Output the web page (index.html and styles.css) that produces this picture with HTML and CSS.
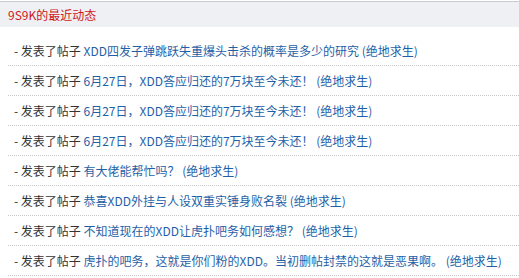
FILE: index.html
```html
<!DOCTYPE html>
<html lang="zh-CN">
<head>
    <meta charset="UTF-8">
    <title>9S9K的最近动态</title>
    <link rel="stylesheet" href="styles.css">
</head>
<body>
    <div class="feed-box">
        <div class="feed-title">9S9K的最近动态</div>
        <ul class="feed-list">
            <li>- 发表了帖子 <a href="#">XDD四发子弹跳跃失重爆头击杀的概率是多少的研究</a> <a href="#">(绝地求生)</a></li>
            <li>- 发表了帖子 <a href="#">6月27日，XDD答应归还的7万块至今未还！</a> <a href="#">(绝地求生)</a></li>
            <li>- 发表了帖子 <a href="#">6月27日，XDD答应归还的7万块至今未还！</a> <a href="#">(绝地求生)</a></li>
            <li>- 发表了帖子 <a href="#">6月27日，XDD答应归还的7万块至今未还！</a> <a href="#">(绝地求生)</a></li>
            <li>- 发表了帖子 <a href="#">有大佬能帮忙吗？</a> <a href="#">(绝地求生)</a></li>
            <li>- 发表了帖子 <a href="#">恭喜XDD外挂与人设双重实锤身败名裂</a> <a href="#">(绝地求生)</a></li>
            <li>- 发表了帖子 <a href="#">不知道现在的XDD让虎扑吧务如何感想？</a> <a href="#">(绝地求生)</a></li>
            <li>- 发表了帖子 <a href="#">虎扑的吧务，这就是你们粉的XDD。当初删帖封禁的这就是恶果啊。</a> <a href="#">(绝地求生)</a></li>
        </ul>
    </div>
</body>
</html>
```

FILE: styles.css
```css
body, html {
    margin: 0;
    padding: 0;
    background: #fff;
    font-family: "Noto Sans CJK SC", "Noto Sans", sans-serif;
    font-size: 12px;
    color: #333;
}

.feed-box {
    margin-top: 1px;
    border-top: 1px solid #c9cbcf;
}

.feed-title {
    height: 25px;
    line-height: 25px;
    padding-left: 8px;
    background: #eef0f3;
    color: #d0171b;
}

.feed-list {
    list-style: none;
    margin: 0;
    padding: 9px 0 0 8px;
}

.feed-list li {
    height: 29px;
    line-height: 29px;
    padding-left: 6px;
    border-bottom: 1px dotted #c8c8c8;
    white-space: nowrap;
}

.feed-list a {
    color: #1f5fa6;
    text-decoration: none;
}
```
